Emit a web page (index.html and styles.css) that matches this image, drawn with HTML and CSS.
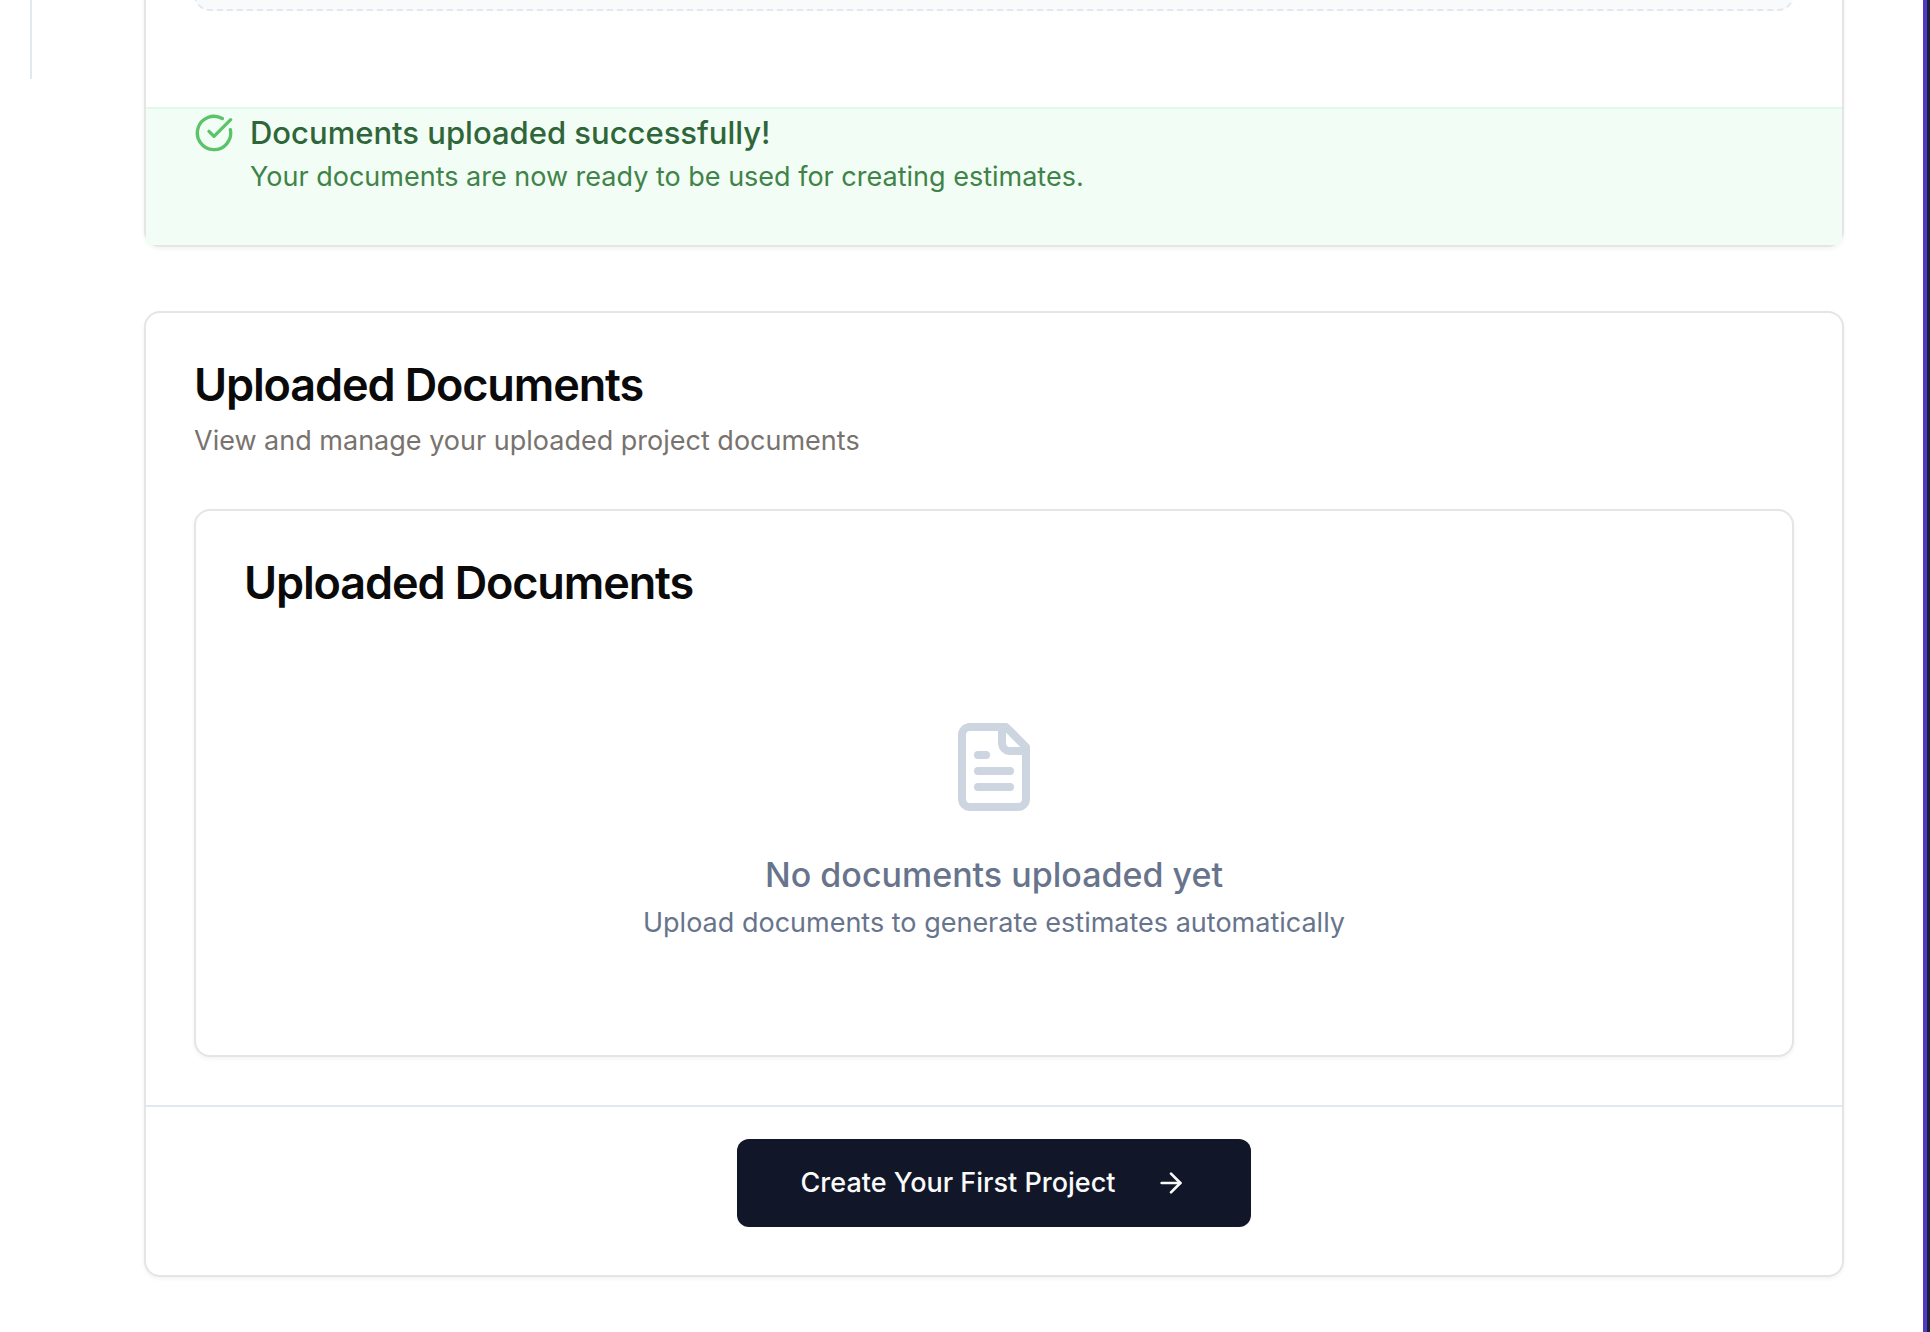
FILE: index.html
```html
<!DOCTYPE html>
<html lang="en">
<head>
  <meta charset="utf-8">
  <meta name="viewport" content="width=device-width, initial-scale=1">
  <title>Documents</title>
  <link rel="stylesheet" href="styles.css">
</head>
<body>
  <div class="layout">
    <aside class="rail"></aside>
    <main class="content">
      <section class="card card-upload">
        <div class="dropzone"></div>
        <div class="notice" role="status">
          <svg class="notice-icon" viewBox="0 0 24 24" aria-hidden="true">
            <path d="M21.801 10A10 10 0 1 1 17 3.335"/>
            <path d="m9 11 3 3L22 4"/>
          </svg>
          <div>
            <p class="notice-title">Documents uploaded successfully!</p>
            <p class="notice-text">Your documents are now ready to be used for creating estimates.</p>
          </div>
        </div>
      </section>

      <section class="card">
        <header class="card-header">
          <h2 class="card-title">Uploaded Documents</h2>
          <p class="card-subtitle">View and manage your uploaded project documents</p>
        </header>
        <div class="card-body">
          <section class="card card-inner">
            <h3 class="card-title">Uploaded Documents</h3>
            <div class="empty">
              <svg class="empty-icon" viewBox="0 0 24 24" aria-hidden="true">
                <path d="M15 2H6a2 2 0 0 0-2 2v16a2 2 0 0 0 2 2h12a2 2 0 0 0 2-2V7Z"/>
                <path d="M14 2v4a2 2 0 0 0 2 2h4"/>
                <path d="M10 9H8"/>
                <path d="M16 13H8"/>
                <path d="M16 17H8"/>
              </svg>
              <p class="empty-title">No documents uploaded yet</p>
              <p class="empty-text">Upload documents to generate estimates automatically</p>
            </div>
          </section>
        </div>
        <footer class="card-footer">
          <button class="button" type="button">
            Create Your First Project
            <svg class="button-icon" viewBox="0 0 24 24" aria-hidden="true">
              <path d="M5 12h14"/>
              <path d="m12 5 7 7-7 7"/>
            </svg>
          </button>
        </footer>
      </section>
    </main>
    <div class="edge"></div>
  </div>
</body>
</html>
```
FILE: styles.css
```css
* {
  box-sizing: border-box;
}

body {
  margin: 0;
  background: #fff;
  color: #0a0a0a;
  font-family: Inter, "Liberation Sans", sans-serif;
  font-size: 27px;
  line-height: 40px;
}

h2, h3, p {
  margin: 0;
}

svg {
  display: block;
  flex: none;
  fill: none;
  stroke: currentColor;
  stroke-width: 2;
  stroke-linecap: round;
  stroke-linejoin: round;
}

.layout {
  display: flex;
  min-height: 100vh;
  overflow: hidden;
}

.rail {
  flex: none;
  width: 32px;
  height: 79px;
  border-right: 2px solid #e2e8f0;
}

.content {
  flex: 1;
  display: flex;
  flex-direction: column;
  gap: 64px;
  min-width: 0;
  padding: 0 79px 48px 112px;
}

.edge {
  flex: none;
  width: 7px;
  background: #1b2230;
  border-left: 4px solid #4f39c6;
}

.card {
  background: #fff;
  border: 2px solid #e5e5e5;
  border-radius: 16px;
  box-shadow: 0 2px 4px rgba(0, 0, 0, 0.05);
}

.card-upload {
  margin-top: -64px;
}

.dropzone {
  height: 73px;
  margin: 0 48px 96px;
  background: #f8fafc;
  border: 2px dashed #e2e8f0;
  border-radius: 16px;
}

.notice {
  display: flex;
  gap: 16px;
  padding: 0 48px 48px;
  background: #f2fdf5;
  border-top: 2px solid #dcfce7;
  border-radius: 0 0 4px 4px;
}

.notice-icon {
  width: 40px;
  height: 40px;
  margin-top: 4px;
  color: #5cc369;
}

.notice-title {
  color: #2f6639;
  font-size: 31px;
  font-weight: 500;
  line-height: 48px;
}

.notice-text {
  color: #3f8348;
}

.card-header {
  display: flex;
  flex-direction: column;
  gap: 12px;
  padding: 48px;
}

.card-title {
  font-size: 45px;
  font-weight: 600;
  line-height: 48px;
  letter-spacing: -0.025em;
}

.card-subtitle {
  color: #78736e;
}

.card-body {
  padding: 0 48px 48px;
}

.card-inner {
  padding: 48px;
}

.empty {
  display: flex;
  flex-direction: column;
  align-items: center;
  margin-top: 48px;
  padding: 64px 0;
  color: #67748c;
  text-align: center;
}

.empty-icon {
  width: 96px;
  height: 96px;
  margin-bottom: 32px;
  color: #cdd5e1;
}

.empty-title {
  font-size: 34px;
  font-weight: 500;
  line-height: 56px;
}

.card-footer {
  display: flex;
  justify-content: center;
  padding: 32px 48px 48px;
  border-top: 2px solid #e2e8f0;
}

.button {
  display: flex;
  align-items: center;
  gap: 40px;
  padding: 24px 64px;
  background: #111728;
  border: 0;
  border-radius: 12px;
  color: #fafafa;
  font: inherit;
  font-weight: 500;
  cursor: pointer;
}

.button-icon {
  width: 32px;
  height: 32px;
}
```
